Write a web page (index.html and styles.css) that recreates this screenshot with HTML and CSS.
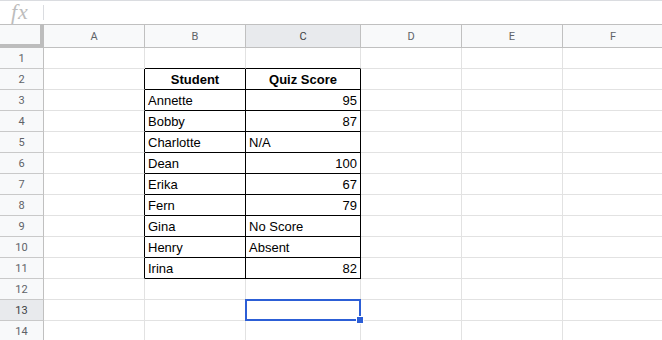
FILE: index.html
```html
<!DOCTYPE HTML>
<html>
<head>
<meta charset="utf-8">
<title>Quiz Scores</title>
<link rel="stylesheet" href="styles.css">
</head>
<body>
<div id="main">
	<div id="formulaBar">
		<span class="fx">fx</span>
		<span class="fxLine"></span>
	</div>
	<div id="sheet">
		<!-- header row -->
		<div class="corner"></div>
		<div class="colHead">A</div>
		<div class="colHead">B</div>
		<div class="colHead on">C</div>
		<div class="colHead">D</div>
		<div class="colHead">E</div>
		<div class="colHead">F</div>

		<div class="rowHead">1</div>
		<div class="cell"></div>
		<div class="cell bb"></div>
		<div class="cell bb"></div>
		<div class="cell"></div>
		<div class="cell"></div>
		<div class="cell"></div>

		<div class="rowHead">2</div>
		<div class="cell br"></div>
		<div class="cell box bold center">Student</div>
		<div class="cell box bold center">Quiz Score</div>
		<div class="cell"></div>
		<div class="cell"></div>
		<div class="cell"></div>

		<div class="rowHead">3</div>
		<div class="cell br"></div>
		<div class="cell box">Annette</div>
		<div class="cell box right">95</div>
		<div class="cell"></div>
		<div class="cell"></div>
		<div class="cell"></div>

		<div class="rowHead">4</div>
		<div class="cell br"></div>
		<div class="cell box">Bobby</div>
		<div class="cell box right">87</div>
		<div class="cell"></div>
		<div class="cell"></div>
		<div class="cell"></div>

		<div class="rowHead">5</div>
		<div class="cell br"></div>
		<div class="cell box">Charlotte</div>
		<div class="cell box">N/A</div>
		<div class="cell"></div>
		<div class="cell"></div>
		<div class="cell"></div>

		<div class="rowHead">6</div>
		<div class="cell br"></div>
		<div class="cell box">Dean</div>
		<div class="cell box right">100</div>
		<div class="cell"></div>
		<div class="cell"></div>
		<div class="cell"></div>

		<div class="rowHead">7</div>
		<div class="cell br"></div>
		<div class="cell box">Erika</div>
		<div class="cell box right">67</div>
		<div class="cell"></div>
		<div class="cell"></div>
		<div class="cell"></div>

		<div class="rowHead">8</div>
		<div class="cell br"></div>
		<div class="cell box">Fern</div>
		<div class="cell box right">79</div>
		<div class="cell"></div>
		<div class="cell"></div>
		<div class="cell"></div>

		<div class="rowHead">9</div>
		<div class="cell br"></div>
		<div class="cell box">Gina</div>
		<div class="cell box">No Score</div>
		<div class="cell"></div>
		<div class="cell"></div>
		<div class="cell"></div>

		<div class="rowHead">10</div>
		<div class="cell br"></div>
		<div class="cell box">Henry</div>
		<div class="cell box">Absent</div>
		<div class="cell"></div>
		<div class="cell"></div>
		<div class="cell"></div>

		<div class="rowHead">11</div>
		<div class="cell br"></div>
		<div class="cell box">Irina</div>
		<div class="cell box right">82</div>
		<div class="cell"></div>
		<div class="cell"></div>
		<div class="cell"></div>

		<div class="rowHead">12</div>
		<div class="cell"></div>
		<div class="cell"></div>
		<div class="cell"></div>
		<div class="cell"></div>
		<div class="cell"></div>
		<div class="cell"></div>

		<div class="rowHead on">13</div>
		<div class="cell"></div>
		<div class="cell"></div>
		<div class="cell active"><div class="select"><i class="handle"></i></div></div>
		<div class="cell"></div>
		<div class="cell"></div>
		<div class="cell"></div>

		<div class="rowHead">14</div>
		<div class="cell"></div>
		<div class="cell"></div>
		<div class="cell"></div>
		<div class="cell"></div>
		<div class="cell"></div>
		<div class="cell"></div>
	</div>
</div>
</body>
</html>
```

FILE: styles.css
```css
/* reset start */
html,body{ overflow:hidden; height:100%;}
body{ margin:0; padding:0; background:#fff; font:13px "Liberation Sans", Arial, sans-serif; color:#000;}
* { box-sizing:border-box;}
/* reset end */

/* formula bar start */
#formulaBar{ height:24px; border-top:1px solid #dadce0; display:flex; align-items:center;}
#formulaBar .fx{ width:43px; padding-left:11px; font:italic 22px "Liberation Serif", serif; color:#bdbdbd; line-height:20px; margin-top:-2px; letter-spacing:1px;}
#formulaBar .fxLine{ width:1px; height:15px; background:#dadce0;}
/* formula bar end */

/* sheet start */
#sheet{ display:grid; grid-template-columns:44px 101px 101px 115px 101px 101px 101px; grid-template-rows:24px repeat(14, 21px); width:664px;}
.corner{ background:#f8f9fa; border-top:1px solid #c0c0c0; border-right:4px solid #bdbdbd; border-bottom:4px solid #bdbdbd;}
.colHead{ background:#f8f9fa; border-top:1px solid #c0c0c0; border-right:1px solid #c0c0c0; border-bottom:1px solid #c0c0c0; display:flex; align-items:center; justify-content:center; font:11px Roboto, "Liberation Sans", sans-serif; color:#5f6368; padding-top:1px;}
.rowHead{ background:#f8f9fa; border-right:1px solid #c0c0c0; border-bottom:1px solid #c9c9c9; display:flex; align-items:center; justify-content:center; font:11px Roboto, "Liberation Sans", sans-serif; color:#5f6368; padding-top:1px;}
.colHead.on,.rowHead.on{ background:#e8eaed; color:#3c4043;}
.cell{ border-right:1px solid #e2e2e2; border-bottom:1px solid #e2e2e2; padding:1px 3px 0; line-height:20px; white-space:nowrap; overflow:visible;}
.cell.bb{ border-bottom-color:#000;}
.cell.br{ border-right-color:#000;}
.cell.box{ border-right-color:#000; border-bottom-color:#000;}
.bold{ font-weight:bold;}
.center{ text-align:center;}
.right{ text-align:right;}
.cell.active{ position:relative;}
.select{ position:absolute; left:-1px; top:-1px; right:-1px; bottom:-1px; border:2px solid #2c5ed6;}
.handle{ position:absolute; right:-5px; bottom:-5px; width:6px; height:6px; background:#2c5ed6; border:1px solid #fff; box-sizing:content-box;}
/* sheet end */
```
